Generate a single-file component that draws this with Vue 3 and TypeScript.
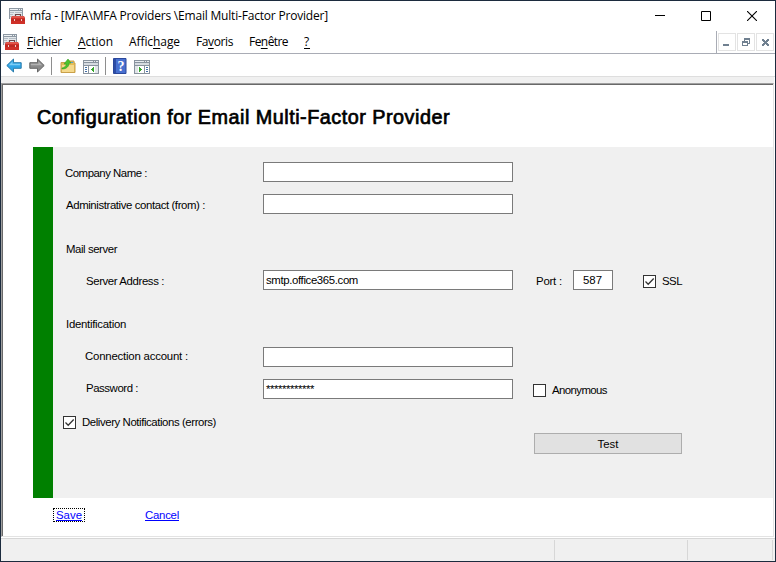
<script setup lang="ts">
import { ref, type Directive } from 'vue'

/** Tracks a label out (or in) until it takes the given width in pixels. */
const vFit: Directive<HTMLElement, number> = {
  mounted(el, { value }) {
    const length = (el.textContent ?? '').length
    const natural = el.getBoundingClientRect().width
    el.style.letterSpacing = `${((value - natural) / length).toFixed(4)}px`
  },
}

interface MenuItem { before: string; key: string; after: string; width: number }

const menus: MenuItem[] = [
  { before: '', key: 'F', after: 'ichier', width: 35 },
  { before: '', key: 'A', after: 'ction', width: 35 },
  { before: 'Affic', key: 'h', after: 'age', width: 51 },
  { before: 'Fa', key: 'v', after: 'oris', width: 37 },
  { before: 'Fe', key: 'n', after: 'être', width: 39 },
  { before: '', key: '?', after: '', width: 6 },
]

const company = ref('')
const contact = ref('')
const server = ref('smtp.office365.com')
const port = ref('587')
const account = ref('')
const password = ref('************')
const ssl = ref(true)
const anonymous = ref(false)
const notify = ref(true)
</script>

<template>
  <div class="window">
    <svg class="defs" width="0" height="0">
      <symbol id="toolbox" viewBox="0 0 16 16">
        <path d="M0 0h14v11H0z" fill="#8d98a3" />
        <path d="M1 1h8v1H1zM10 1h1v1h-1zM12 1h1v1h-1z" fill="#eef2f5" />
        <path d="M1 3h12v8H1z" fill="#e3e7ea" />
        <path d="M1 4h4v1H1zM6 4h7v1H6zM1 6h3v1H1zM1 8h2v1H1z" fill="#b3bcc5" />
        <path d="M6.500 9V6.500h5V9" fill="none" stroke="#6b4a4c" stroke-width="1.200" />
        <path d="M3 8h12l1 2v6H2v-6z" fill="#cf3028" />
        <path d="M3.300 8h11.400l.8 2H2.500z" fill="#e0544a" />
        <path d="M2 12h14" stroke="#a51f19" stroke-width=".8" />
        <path d="M5 11h1v2H5zM12 11h1v2h-1z" fill="#f0cfcb" />
      </symbol>
      <symbol id="tick" viewBox="0 0 13 13">
        <path d="M2.500 6.500 5.200 9.200 10.700 3.500" fill="none" stroke="#333" stroke-width="1.300" />
      </symbol>
    </svg>

    <header class="titlebar">
      <svg class="app-icon" width="16" height="16"><use href="#toolbox" /></svg>
      <span class="title"><span v-fit="298" class="fit">mfa - [MFA\MFA Providers \Email Multi-Factor Provider]</span></span>
      <div class="controls">
        <svg width="10" height="10" shape-rendering="crispEdges"><path d="M0 4h10v1H0z" /></svg>
        <svg width="10" height="10"><path d="M.5.5h9v9h-9z" fill="none" stroke="#000" /></svg>
        <svg width="10" height="10"><path d="M0 0 10 10M10 0 0 10" stroke="#000" stroke-width="1.100" /></svg>
      </div>
    </header>

    <nav class="menubar">
      <svg class="menu-icon" width="16" height="16"><use href="#toolbox" /></svg>
      <div class="menus">
        <span v-for="m in menus" :key="m.key" v-fit="m.width" class="fit">{{ m.before }}<u>{{ m.key }}</u>{{ m.after }}</span>
      </div>
      <div class="mdi">
        <i><svg width="18" height="18"><path d="M5 11h6v2H5z" /></svg></i>
        <i><svg width="18" height="18"><path d="M7 5h6v6h-2v-1h1V7H8v1H7zM5 8h6v5H5zM6 10v2h4v-2z" fill-rule="evenodd" /></svg></i>
        <i><svg width="18" height="18"><path d="M6 6h2l1.500 2L11 6h2v2l-2 1.500 2 1.500v2h-2l-1.500-2L8 13H6v-2l2-1.500L6 8z" /></svg></i>
      </div>
    </nav>

    <div class="toolbar">
      <svg width="16" height="15" viewBox="0 0 16 15"><path d="M.8 7.500 7.500 1v3.700h7.700v5.600H7.500V14z" fill="#30a5e6" stroke="#2b7cab" /><path d="M3 7 6.500 3.500v2.200h7.700v1.500H3z" fill="#7dcdf5" /></svg>
      <svg width="16" height="15" viewBox="0 0 16 15"><path d="M15.200 7.500 8.500 1v3.700H.8v5.600h7.700V14z" fill="#8a8a8a" stroke="#666" /><path d="M13 7 9.500 3.500v2.200H1.800v1.500H13z" fill="#b2b2b2" /></svg>
      <b class="sep sep-a"></b>
      <svg width="16" height="16" viewBox="0 0 16 16"><path d="M1 4.500h6l1-1.500h6v2h1v9.500H1z" fill="#e4bd58" stroke="#c9a04a" /><path d="M2 7h12v7H2z" fill="#f5d98c" /><path d="M11 4h2v1h-2z" fill="#4d9fdb" /><path d="M2 10c3-.5 4-2 4.300-4H4L8 1l3 4H9.200c-.5 4-3 6-7.200 6z" fill="#4cc22d" stroke="#38a021" stroke-width=".6" /></svg>
      <svg class="pane" width="16" height="14" viewBox="0 0 16 14" shape-rendering="crispEdges"><path d="M0 0h16v14H0z" fill="#89939e" /><path d="M1 1h9v1H1zM11 1h1v1h-1zM13 1h2v1h-2z" fill="#e7ebef" /><path d="M1 3h14v2H1z" fill="#d5dae0" /><path d="M1 6h4v7H1zM6 6h9v7H6z" fill="#fff" /><path d="M2 7h2v1H2zM2 9h2v1H2zM2 11h2v1H2z" fill="#426fa7" /><path d="M8 9.500 11 7v5z" fill="#35a52b" /><path d="M12 6h3v7h-3z" fill="#e1e5e8" /></svg>
      <b class="sep sep-b"></b>
      <svg width="14" height="16" viewBox="0 0 14 16"><path d="M.5.5h12.500v15H.5z" fill="#4870d0" stroke="#2a479b" /><path d="M1 1h2v14H1z" fill="#2d4da5" /><text x="8" y="13" class="help-mark">?</text></svg>
      <svg class="pane" width="16" height="14" viewBox="0 0 16 14" shape-rendering="crispEdges"><path d="M0 0h16v14H0z" fill="#89939e" /><path d="M1 1h9v1H1zM11 1h1v1h-1zM13 1h2v1h-2z" fill="#e7ebef" /><path d="M1 3h14v2H1z" fill="#d5dae0" /><path d="M1 6h9v7H1zM11 6h4v7h-4z" fill="#fff" /><path d="M12 7h2v1h-2zM12 9h2v1h-2zM12 11h2v1h-2z" fill="#426fa7" /><path d="M1 6h3v7H1z" fill="#e1e5e8" /><path d="M8 9.500 5 7v5z" fill="#35a52b" /></svg>
    </div>

    <main class="view">
      <h1><span v-fit="413" class="fit">Configuration for Email Multi-Factor Provider</span></h1>

      <form class="panel" @submit.prevent>
        <div class="row">
          <label class="nudge-left"><span v-fit="82" class="fit">Company Name :</span></label>
          <input v-model="company" class="field">
        </div>
        <div class="row gap-12">
          <label><span v-fit="139" class="fit">Administrative contact (from) :</span></label>
          <input v-model="contact" class="field">
        </div>
        <div class="section"><span v-fit="51" class="fit">Mail server</span></div>
        <div class="row">
          <label class="sub"><span v-fit="78" class="fit">Server Address :</span></label>
          <div class="field"><span v-fit="92" class="fit">{{ server }}</span></div>
          <span class="port-label"><span v-fit="26" class="fit">Port :</span></span>
          <div class="field port"><span v-fit="19" class="fit">{{ port }}</span></div>
          <div class="check ssl" @click="ssl = !ssl"><i class="box"><svg v-if="ssl" width="13" height="13"><use href="#tick" /></svg></i><span v-fit="20" class="fit">SSL</span></div>
        </div>
        <div class="section second"><span v-fit="60" class="fit">Identification</span></div>
        <div class="row">
          <label class="sub up nudge-left"><span v-fit="103" class="fit">Connection account :</span></label>
          <input v-model="account" class="field">
        </div>
        <div class="row gap-12">
          <label class="sub up"><span v-fit="52" class="fit">Password :</span></label>
          <div class="field secret"><span v-fit="48" class="fit">{{ password }}</span></div>
          <div class="check anonymous" @click="anonymous = !anonymous"><i class="box"><svg v-if="anonymous" width="13" height="13"><use href="#tick" /></svg></i><span v-fit="55" class="fit">Anonymous</span></div>
        </div>
        <div class="check notify" @click="notify = !notify"><i class="box"><svg v-if="notify" width="13" height="13"><use href="#tick" /></svg></i><span v-fit="134" class="fit">Delivery Notifications (errors)</span></div>
        <button class="test" type="button"><span v-fit="21" class="fit">Test</span></button>
      </form>

      <div class="links">
        <a class="save"><span v-fit="26" class="fit">Save</span></a>
        <a class="cancel"><span v-fit="34" class="fit">Cancel</span></a>
      </div>
    </main>

    <footer class="status"><i class="cell first"></i><i class="cell second-cell"></i><i class="cell third"></i></footer>
  </div>
</template>

<style>
body { margin: 0; overflow: hidden; }
</style>

<style scoped>
* { box-sizing: border-box; }
.window {
  width: 776px; height: 562px; display: flex; flex-direction: column;
  border: 1px solid #1c2b3e; background: #fff; color: #000;
  font: 11.400px/14px "Liberation Sans", Arial, sans-serif;
}
.defs { position: absolute; }
svg { display: block; flex: none; }
.fit { display: inline-block; white-space: pre; text-indent: 0; }
.titlebar, .menubar { font-family: "Open Sans", "Noto Sans", sans-serif; font-size: 12px; line-height: 16px; }
.titlebar { height: 30px; flex: none; display: flex; align-items: center; padding: 0 18px 0 8px; }
.title { margin-left: 5px; }
.controls { margin-left: auto; display: flex; gap: 36px; }
.menubar { height: 22px; flex: none; display: flex; align-items: center; padding-left: 2px; }
.menus { display: flex; gap: 16px; margin-left: 8px; flex: 1; }
.menus u { text-underline-offset: 2px; text-decoration-thickness: 1px; }
.mdi { height: 23px; margin-top: 1px; padding: 2px 1px 0 1px; display: flex; gap: 1px; border-left: 1px solid #a9acb5; }
.mdi i { width: 18px; height: 18px; border: 1px solid #e3e3e3; display: flex; align-items: center; justify-content: center; }
.mdi svg { fill: #708090; shape-rendering: crispEdges; }
.toolbar { height: 24px; flex: none; display: flex; align-items: center; padding: 1px 0 0 5px; gap: 7px; border-top: 1px solid #a9acb5; border-bottom: 1px solid #dedede; }
.sep { width: 1px; height: 18px; background: #8e8e8e; margin-top: -1px; }
.sep-a { margin: 0 1px 0 -1px; }
.sep-b { margin: 0 0 0 -1px; }
.pane { margin-top: 3px; }
.help-mark { font: bold 14px "Liberation Serif", serif; fill: #fff; text-anchor: middle; }
.view {
  height: 454px; flex: none; margin-top: 6px; margin-right: 1px; display: flex; flex-direction: column;
  border-left: 1px solid #a0a0a0; border-top: 1px solid #a0a0a0; border-right: 1px solid #e3e3e3; border-bottom: 1px solid #e3e3e3;
  box-shadow: inset 1px 1px #696969, 0 -6px #f0f0f0;
}
h1 { margin: 0; height: 63px; padding: 22px 0 0 35px; font-size: 19.800px; line-height: 23px; font-weight: 400; -webkit-text-stroke: .7px #000; }
.panel { height: 351px; flex: none; margin-left: 31px; padding: 15px 0 0 13px; background: #f0f0f0; border-left: 20px solid #008000; }
.row { height: 20px; display: flex; align-items: center; }
.gap-12 { margin-top: 12px; }
label { width: 197px; flex: none; padding-top: 2px; }
.nudge-left { text-indent: -1px; }
.sub { padding-left: 20px; }
.up { padding: 0 0 2px 20px; }
.field { width: 250px; height: 20px; margin: 0; padding: 0 2px; border: 1px solid #7a7a7a; background: #fff; font: inherit; line-height: 18px; flex: none; outline: none; border-radius: 0; }
.section { height: 56px; padding-top: 28px; }
.section.second { height: 57px; padding-top: 27px; }
.secret { line-height: 18px; }
.port-label { width: 37px; margin-left: 23px; padding-top: 2px; }
.port { width: 40px; padding: 0 9px; }
.check { display: flex; align-items: center; gap: 6px; }
.box { width: 13px; height: 13px; border: 1px solid #333; background: #fff; flex: none; }
.box svg { margin: -1px; }
.ssl { margin-left: 30px; padding-top: 2px; }
.anonymous { margin-left: 20px; padding-top: 2px; }
.notify { height: 14px; margin: 16px 0 0 -3px; }
.test { display: block; width: 148px; height: 21px; margin: 4px 0 0 468px; padding: 0; border: 1px solid #adadad; background: #e1e1e1; font: inherit; color: #000; border-radius: 0; }
.links { display: flex; align-items: flex-start; padding: 10px 0 0 51px; color: #00f; }
.links a { height: 14px; line-height: 14px; }
.save { width: 32px; padding-left: 3px; outline: 1px dotted #000; outline-offset: -1px; }
.cancel { margin-left: 60px; }
.links .fit { text-decoration: underline; }
.status { height: 23px; flex: none; margin-top: 1px; padding-top: 1px; display: flex; border-top: 1px solid #d7d7d7; background: #f0f0f0; }
.cell { height: 20px; border-right: 1px solid #d7d7d7; }
.first { width: 554px; }
.second-cell { width: 133px; }
.third { width: 85px; }
</style>
